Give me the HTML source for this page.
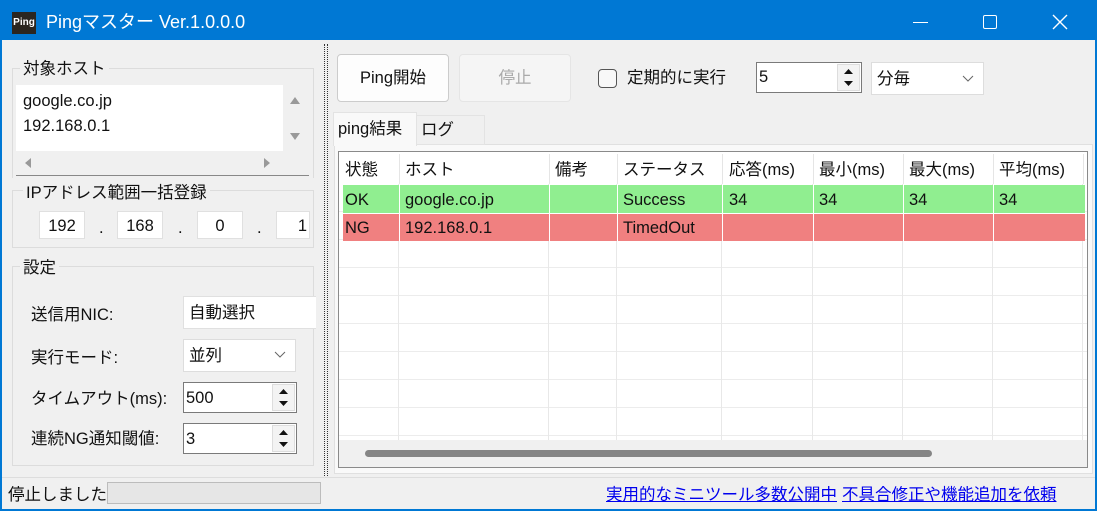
<!DOCTYPE html>
<html><head><meta charset="utf-8"><style>
*{box-sizing:border-box;margin:0;padding:0}
body{width:1097px;height:511px;overflow:hidden;background:#0078d4;font-family:"Liberation Sans","Noto Sans CJK JP",sans-serif;font-size:16.5px;color:#111;position:relative}
.a{position:absolute}
.t{white-space:nowrap;line-height:20px}
#win{left:2px;top:40px;width:1093px;height:469px;background:#f0f0f0}
.grp{border:1px solid #dcdcdc}
.lbl{background:#f0f0f0;padding:0 3px}
.box{background:#fff;border:1px solid #ccc}
.inp{background:#fff;border:1px solid #7a7a7a}
.col{border-right:1px solid #e8e8e8}
.w{position:absolute;top:185px;width:1px;height:56px;background:#fff}
</style></head><body>
<div class="a" style="left:12px;top:12px;width:24px;height:22px;background:#2b2620;color:#fff;font-size:10px;line-height:22px;text-align:center;font-weight:bold">Ping</div>
<div class="a t" style="left:46px;top:12px;color:#fff;font-size:18px">Pingマスター Ver.1.0.0.0</div>
<div class="a" style="left:913px;top:22px;width:15px;height:1px;background:#fff"></div>
<div class="a" style="left:983px;top:15px;width:14px;height:14px;border:1.5px solid #fff;border-radius:2px"></div>
<svg class="a" style="left:1052px;top:14px" width="16" height="16"><path d="M1 1L15 15M15 1L1 15" stroke="#fff" stroke-width="1.4"/></svg>
<div id="win" class="a"></div>
<div class="a grp" style="left:12px;top:68px;width:302px;height:110px;border-bottom:none"></div>
<div class="a t lbl" style="left:20px;top:59px">対象ホスト</div>
<div class="a" style="left:16px;top:85px;width:293px;height:91px;background:#f0f0f0;border-bottom:1px solid #888"></div>
<div class="a" style="left:16px;top:85px;width:267px;height:66px;background:#fff"></div>
<div class="a t" style="left:23px;top:91px">google.co.jp</div>
<div class="a t" style="left:23px;top:116px">192.168.0.1</div>
<svg class="a" style="left:288px;top:94px" width="14" height="50"><path d="M2 10L7 3L12 10Z M2 39L12 39L7 46Z" fill="#999"/></svg>
<svg class="a" style="left:24px;top:156px" width="250" height="14"><path d="M7 2L7 12L1 7Z M240 2L240 12L246 7Z" fill="#999"/></svg>
<div class="a grp" style="left:12px;top:190px;width:302px;height:58px"></div>
<div class="a t lbl" style="left:23px;top:183px">IPアドレス範囲一括登録</div>
<div class="a box t" style="left:39px;top:211px;width:46px;height:28px;border-color:#e0e0e0;text-align:center;padding-top:4px">192</div>
<div class="a box t" style="left:117px;top:211px;width:46px;height:28px;border-color:#e0e0e0;text-align:center;padding-top:4px">168</div>
<div class="a box t" style="left:197px;top:211px;width:46px;height:28px;border-color:#e0e0e0;text-align:center;padding-top:4px">0</div>
<div class="a box t" style="left:276px;top:211px;width:34px;height:28px;border-color:#e0e0e0;text-align:right;padding:4px 2px 0 0">1</div>
<div class="a t" style="left:99px;top:218px">.</div>
<div class="a t" style="left:178px;top:218px">.</div>
<div class="a t" style="left:257px;top:218px">.</div>
<div class="a grp" style="left:12px;top:266px;width:302px;height:200px"></div>
<div class="a t lbl" style="left:20px;top:258px">設定</div>
<div class="a t" style="left:31px;top:305px">送信用NIC:</div>
<div class="a box t" style="left:183px;top:296px;width:133px;height:33px;border-color:#e0e0e0;border-right:none;padding:6px 5px">自動選択</div>
<div class="a t" style="left:31px;top:348px">実行モード:</div>
<div class="a box t" style="left:183px;top:339px;width:113px;height:33px;border-color:#ddd;padding:6px 5px">並列</div>
<svg class="a" style="left:274px;top:351px" width="12" height="8"><path d="M1 1L6 6L11 1" stroke="#666" fill="none"/></svg>
<div class="a t" style="left:31px;top:389px">タイムアウト(ms):</div>
<div class="a inp t" style="left:183px;top:382px;width:114px;height:31px;padding:5px 2px">500</div>
<div class="a t" style="left:31px;top:429px">連続NG通知閾値:</div>
<div class="a inp t" style="left:183px;top:423px;width:114px;height:31px;padding:5px 2px">3</div>
<svg class="a" style="left:272px;top:384px" width="24" height="70"><rect x="0.5" y="0.5" width="22" height="26" fill="#f3f3f3" stroke="#ddd"/><path d="M7 10L11.5 5L16 10Z M7 17L16 17L11.5 22Z" fill="#111"/><rect x="0.5" y="41.5" width="22" height="26" fill="#f3f3f3" stroke="#ddd"/><path d="M7 51L11.5 46L16 51Z M7 58L16 58L11.5 63Z" fill="#111"/></svg>
<div class="a" style="left:324px;top:44px;width:4px;height:432px;border-left:1px dotted #333;border-right:1px dotted #333"></div>
<div class="a" style="left:2px;top:477px;width:1093px;height:1px;background:#ddd"></div>
<div class="a t" style="left:8px;top:485px">停止しました</div>
<div class="a" style="left:107px;top:482px;width:214px;height:22px;background:#e6e6e6;border:1px solid #bcbcbc"></div>
<div class="a t" style="left:606px;top:485px;color:#00e;text-decoration:underline">実用的なミニツール多数公開中</div>
<div class="a t" style="left:842px;top:485px;color:#00e;text-decoration:underline">不具合修正や機能追加を依頼</div>
<div class="a t" style="left:337px;top:54px;width:112px;height:48px;background:#fdfdfd;border:1px solid #ccc;border-radius:4px;text-align:center;padding-top:13px">Ping開始</div>
<div class="a t" style="left:459px;top:54px;width:112px;height:48px;background:#f5f5f5;border:1px solid #e5e5e5;border-radius:4px;text-align:center;padding-top:13px;color:#aaa">停止</div>
<div class="a" style="left:598px;top:69px;width:19px;height:19px;border:1px solid #555;border-radius:4px;background:#f8f8f8"></div>
<div class="a t" style="left:627px;top:68px">定期的に実行</div>
<div class="a inp t" style="left:756px;top:62px;width:106px;height:31px;padding:4px 2px">5</div>
<svg class="a" style="left:837px;top:64px" width="24" height="28"><rect x="0.5" y="0.5" width="22" height="26" fill="#f3f3f3" stroke="#ddd"/><path d="M7 10L11.5 5L16 10Z M7 17L16 17L11.5 22Z" fill="#111"/></svg>
<div class="a box t" style="left:871px;top:62px;width:113px;height:33px;border-color:#ddd;padding:6px 5px">分毎</div>
<svg class="a" style="left:962px;top:75px" width="12" height="8"><path d="M1 1L6 6L11 1" stroke="#666" fill="none"/></svg>
<div class="a" style="left:334px;top:144px;width:759px;height:330px;background:#f9f9f9;border:1px solid #e0e0e0"></div>
<div class="a t" style="left:416px;top:115px;width:69px;height:30px;background:#f0f0f0;border:1px solid #e3e3e3;padding:4px 4px">ログ</div>
<div class="a t" style="left:333px;top:112px;width:84px;height:34px;background:#f9f9f9;border:1px solid #e3e3e3;border-bottom:none;padding:6px 4px">ping結果</div>
<div class="a" style="left:338px;top:151px;width:750px;height:317px;background:#fff;border:1px solid #8a8a8a"></div>
<div class="a" style="left:339px;top:152px;width:748px;height:288px;background:
repeating-linear-gradient(to bottom,transparent 0,transparent 27px,#ececec 27px,#ececec 28px);background-position:0 4px"></div>
<div class="a col" style="left:339px;top:152px;width:60px;height:288px"></div>
<div class="a col" style="left:399px;top:152px;width:150px;height:288px"></div>
<div class="a col" style="left:549px;top:152px;width:68px;height:288px"></div>
<div class="a col" style="left:617px;top:152px;width:105px;height:288px"></div>
<div class="a col" style="left:722px;top:152px;width:91px;height:288px"></div>
<div class="a col" style="left:813px;top:152px;width:90px;height:288px"></div>
<div class="a col" style="left:903px;top:152px;width:90px;height:288px"></div>
<div class="a col" style="left:993px;top:152px;width:90px;height:288px"></div>
<div class="a" style="left:343px;top:185px;width:742px;height:28px;background:#90ee90"></div>
<div class="a" style="left:343px;top:213px;width:742px;height:28px;background:#f08080;border-top:1px solid #fff"></div>
<div class="w" style="left:399px"></div><div class="w" style="left:549px"></div><div class="w" style="left:617px"></div><div class="w" style="left:722px"></div><div class="w" style="left:813px"></div><div class="w" style="left:903px"></div><div class="w" style="left:993px"></div>
<div class="a" style="left:339px;top:152px;width:748px;height:32px;background:#fff"></div>
<div class="a" style="left:399px;top:154px;width:1px;height:30px;background:#e5e5e5"></div>
<div class="a" style="left:549px;top:154px;width:1px;height:30px;background:#e5e5e5"></div>
<div class="a" style="left:617px;top:154px;width:1px;height:30px;background:#e5e5e5"></div>
<div class="a" style="left:722px;top:154px;width:1px;height:30px;background:#e5e5e5"></div>
<div class="a" style="left:813px;top:154px;width:1px;height:30px;background:#e5e5e5"></div>
<div class="a" style="left:903px;top:154px;width:1px;height:30px;background:#e5e5e5"></div>
<div class="a" style="left:993px;top:154px;width:1px;height:30px;background:#e5e5e5"></div>
<div class="a" style="left:1083px;top:154px;width:1px;height:30px;background:#e5e5e5"></div>
<div class="a t" style="left:345px;top:160px">状態</div>
<div class="a t" style="left:405px;top:160px">ホスト</div>
<div class="a t" style="left:555px;top:160px">備考</div>
<div class="a t" style="left:623px;top:160px">ステータス</div>
<div class="a t" style="left:729px;top:160px">応答(ms)</div>
<div class="a t" style="left:819px;top:160px">最小(ms)</div>
<div class="a t" style="left:909px;top:160px">最大(ms)</div>
<div class="a t" style="left:999px;top:160px">平均(ms)</div>
<div class="a t" style="left:345px;top:190px">OK</div>
<div class="a t" style="left:405px;top:190px">google.co.jp</div>
<div class="a t" style="left:623px;top:190px">Success</div>
<div class="a t" style="left:729px;top:190px">34</div>
<div class="a t" style="left:819px;top:190px">34</div>
<div class="a t" style="left:909px;top:190px">34</div>
<div class="a t" style="left:999px;top:190px">34</div>
<div class="a t" style="left:345px;top:218px">NG</div>
<div class="a t" style="left:405px;top:218px">192.168.0.1</div>
<div class="a t" style="left:623px;top:218px">TimedOut</div>
<div class="a" style="left:339px;top:440px;width:748px;height:27px;background:#f0f0f0"></div>
<div class="a" style="left:365px;top:450px;width:567px;height:7px;background:#858585;border-radius:4px"></div>
</body></html>
